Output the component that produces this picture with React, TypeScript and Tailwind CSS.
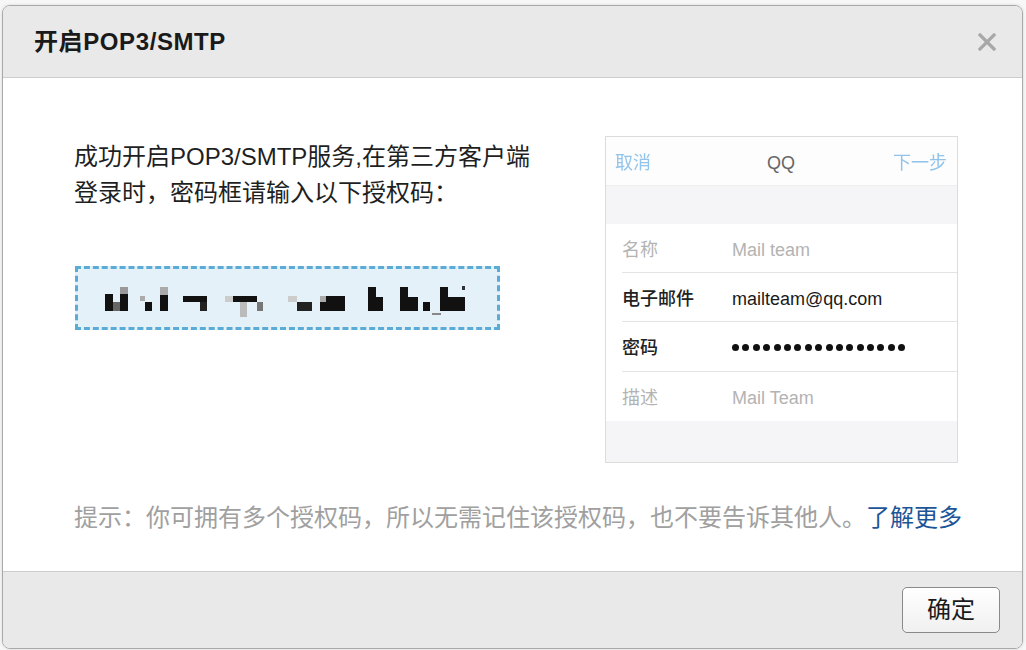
import React from 'react'

const FONT = '"Liberation Sans", "Noto Sans CJK SC", sans-serif'

// 授权码（模糊処理された像素块）
const codeBlocks: [number, number, number, number, string][] = [
    [105, 295, 8, 17, '#111'],
    [113, 303, 7, 9, '#666'],
    [120, 288, 8, 7, '#999'],
    [120, 295, 8, 17, '#111'],
    [140, 297, 5, 5, '#aaa'],
    [145, 303, 7, 9, '#111'],
    [160, 288, 8, 8, '#aaa'],
    [160, 296, 8, 16, '#111'],
    [183, 297, 24, 6, '#111'],
    [200, 303, 7, 9, '#222'],
    [225, 297, 8, 6, '#ccc'],
    [233, 297, 24, 6, '#111'],
    [240, 303, 7, 15, '#bbb'],
    [257, 303, 6, 9, '#777'],
    [288, 297, 9, 6, '#ccc'],
    [297, 303, 15, 9, '#222'],
    [320, 297, 6, 6, '#aaa'],
    [320, 303, 25, 9, '#111'],
    [326, 297, 19, 6, '#111'],
    [368, 288, 8, 24, '#111'],
    [376, 298, 7, 14, '#111'],
    [400, 288, 8, 24, '#111'],
    [408, 298, 10, 14, '#111'],
    [423, 303, 7, 9, '#111'],
    [440, 288, 8, 24, '#111'],
    [448, 298, 17, 14, '#111'],
    [462, 287, 3, 4, '#333'],
    [432, 314, 9, 2, '#888'],
]

export default function App() {
    return (
        <div className="w-[1026px] h-[650px] bg-[#f7f7f7] pt-[5px] pl-[2px]" style={{ fontFamily: FONT }}>
            <div className="w-[1021px] h-[644px] rounded-[8px] border border-[#a9a9a9] overflow-hidden flex flex-col shadow-[0_0_3px_rgba(0,0,0,0.15)]">

                {/* ヘッダー */}
                <div className="h-[72px] shrink-0 bg-[#e9e9e9] border-b border-[#cdcdcd] flex items-center justify-between pl-[31px] pr-[26px]">
                    <h1 className="text-[24px] font-bold text-[#1a1a1a] leading-none tracking-[0.6px]">开启POP3/SMTP</h1>
                    <svg width="18" height="18" viewBox="0 0 18 18">
                        <path d="M2 2 L16 16 M16 2 L2 16" stroke="#a8a8a8" strokeWidth="3.2" strokeLinecap="square" />
                    </svg>
                </div>

                {/* 本体 */}
                <div className="flex-1 bg-white pl-[71px] pr-[64px] pt-[58px]">
                    <div className="flex">
                        <div className="w-[460px] mt-[3px]">
                            <p className="text-[24px] leading-[36px] text-[#1f1f1f]">
                                成功开启POP3/SMTP服务,在第三方客户端登录时，密码框请输入以下授权码：
                            </p>
                            <div className="mt-[55px] ml-[1px] w-[425px] h-[64px] border-[3px] border-dashed border-[#5aabd6] bg-[#e5f1f9]">
                                <svg width="419" height="58" viewBox="78 270 419 58">
                                    {codeBlocks.map(([x, y, w, h, c], i) => (
                                        <rect key={i} x={x} y={y} width={w} height={h} fill={c} />
                                    ))}
                                </svg>
                            </div>
                        </div>

                        <PhoneShot />
                    </div>

                    <p className="mt-[37px] text-[24px] leading-[36px] text-[#a0a0a0] whitespace-nowrap">
                        提示：你可拥有多个授权码，所以无需记住该授权码，也不要告诉其他人。
                        <span className="text-[#1d5599]">了解更多</span>
                    </p>
                </div>

                {/* フッター */}
                <div className="h-[77px] shrink-0 bg-[#e9e9e9] border-t border-[#cdcdcd] flex items-center justify-end pr-[22px]">
                    <button className="w-[98px] h-[46px] rounded-[5px] border-[1.5px] border-[#8a8a8a] bg-gradient-to-b from-white to-[#f0f0f0] text-[24px] text-[#1a1a1a] leading-none">
                        确定
                    </button>
                </div>
            </div>
        </div>
    )
}

function PhoneShot() {
    return (
        <div className="ml-auto w-[353px] h-[327px] border border-[#dcdcdc] flex flex-col text-[18px]">
            <div className="h-[49px] shrink-0 bg-[#fdfdfd] border-b border-[#eeeeee] flex items-center justify-between pl-[9px] pr-[10px] pt-[5px]">
                <span className="text-[#93c5ec] blur-[0.3px]">取消</span>
                <span className="text-[#666] ml-[18px]">QQ</span>
                <span className="text-[#8fc3eb] blur-[0.3px]">下一步</span>
            </div>
            <div className="h-[38px] shrink-0 bg-[#f5f5f7]" />
            <div className="bg-white pl-[16px]">
                <Row label="名称" value="Mail team" dim />
                <Row label="电子邮件" value="mailteam@qq.com" />
                <div className="h-[50px] pt-[4px] flex items-center border-b border-[#e4e4e4]">
                    <span className="w-[110px] text-[#222] font-medium">密码</span>
                    <div className="flex gap-[3.4px] -mt-[2px]">
                        {Array.from({ length: 17 }).map((_, i) => (
                            <span key={i} className="w-[7px] h-[7px] rounded-full bg-[#111]" />
                        ))}
                    </div>
                </div>
                <Row label="描述" value="Mail Team" dim last />
            </div>
            <div className="flex-1 bg-[#f5f5f7]" />
        </div>
    )
}

function Row({ label, value, dim, last }: { label: string; value: string; dim?: boolean; last?: boolean }) {
    return (
        <div className={`h-[49px] pt-[4px] flex items-center ${last ? '' : 'border-b border-[#e4e4e4]'}`}>
            <span className={`w-[110px] ${dim ? 'text-[#b3b3b3]' : 'text-[#222] font-medium'}`}>{label}</span>
            <span className={dim ? 'text-[#b3b3b3]' : 'text-[#1a1a1a] font-medium'}>{value}</span>
        </div>
    )
}
